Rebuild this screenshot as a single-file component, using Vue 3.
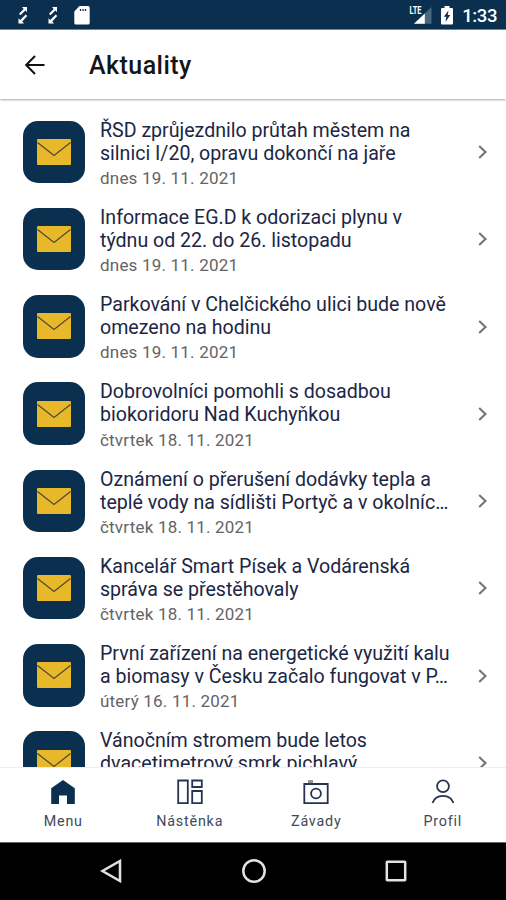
<script setup>
import { ref } from 'vue'

const activeTab = ref('menu')

const articles = [
  { id: 1, lines: ['ŘSD zprůjezdnilo průtah městem na', 'silnici I/20, opravu dokončí na jaře'], date: 'dnes 19. 11. 2021' },
  { id: 2, lines: ['Informace EG.D k odorizaci plynu v', 'týdnu od 22. do 26. listopadu'], date: 'dnes 19. 11. 2021' },
  { id: 3, lines: ['Parkování v Chelčického ulici bude nově', 'omezeno na hodinu'], date: 'dnes 19. 11. 2021' },
  { id: 4, lines: ['Dobrovolníci pomohli s dosadbou', 'biokoridoru Nad Kuchyňkou'], date: 'čtvrtek 18. 11. 2021' },
  { id: 5, lines: ['Oznámení o přerušení dodávky tepla a', 'teplé vody na sídlišti Portyč a v okolníc…'], date: 'čtvrtek 18. 11. 2021' },
  { id: 6, lines: ['Kancelář Smart Písek a Vodárenská', 'správa se přestěhovaly'], date: 'čtvrtek 18. 11. 2021' },
  { id: 7, lines: ['První zařízení na energetické využití kalu', 'a biomasy v Česku začalo fungovat v P…'], date: 'úterý 16. 11. 2021' },
  { id: 8, lines: ['Vánočním stromem bude letos', 'dvacetimetrový smrk pichlavý'] },
]

const tabs = [
  { id: 'menu', label: 'Menu' },
  { id: 'board', label: 'Nástěnka' },
  { id: 'issues', label: 'Závady' },
  { id: 'profile', label: 'Profil' },
]
</script>

<template>
  <div class="phone">
    <header class="status-bar">
      <div class="status-left">
        <svg v-for="n in 2" :key="n" class="sync-icon" width="10" height="17" viewBox="0 0 10 17">
          <path d="M4 0h5v5L7.300 3.500 2.500 8.300 1 6.800l4.700-4.900z" />
          <path d="M6 16.500H.5v-5.300l1.700 1.700L7.700 7.500 9.200 9l-5 5.500z" />
        </svg>
        <svg class="sd-icon" width="16" height="19" viewBox="0 0 16 19">
          <path d="M5.500 0H14a1.700 1.700 0 0 1 1.700 1.700v15.200a1.700 1.700 0 0 1-1.700 1.700H2A1.700 1.700 0 0 1 .3 16.900V5.500z" fill="#fff" />
          <path d="M6.500 3v2M9 3v2M11.500 3v2" stroke="#0b304f" stroke-width="1.300" />
        </svg>
      </div>
      <div class="status-right">
        <svg width="23" height="20" viewBox="0 0 23 20">
          <path d="M22.500 1v16.800H5z" fill="#48687f" />
          <path d="M15.800 7.500v10.300H5z" fill="#fff" />
          <path d="M0 0h13v9.300H0z" fill="#0b304f" />
          <text x=".5" y="8.200" class="lte" textLength="12" lengthAdjust="spacingAndGlyphs">LTE</text>
        </svg>
        <svg class="battery" width="12" height="19" viewBox="0 0 12 19">
          <path d="M3.500 0h5v2H11a1 1 0 0 1 1 1v14.500a1 1 0 0 1-1 1H1a1 1 0 0 1-1-1V3a1 1 0 0 1 1-1h2.500z" fill="#fff" />
          <path d="M7.500 4.500L2.800 10.800h2.500L4.500 16 9.200 9H6.700z" fill="#0b304f" />
        </svg>
        <span class="clock">1:33</span>
      </div>
    </header>

    <section class="app-bar">
      <button class="back-btn" aria-label="Zpět">
        <svg width="20" height="20" viewBox="0 0 20 20">
          <path d="M19.500 10H1.500M10 1L1.200 10l8.800 9" fill="none" stroke="#111" stroke-width="2" />
        </svg>
      </button>
      <h1>Aktuality</h1>
    </section>

    <main class="news-list">
      <article v-for="article in articles" :key="article.id" class="news-row">
        <div class="news-icon">
          <svg width="34" height="26" viewBox="0 0 34 26">
            <rect width="34" height="26" rx="1" fill="#e8b82b" />
            <path d="M.5 3.500L17 16.500 33.500 3.500" fill="none" stroke="#4b4930" stroke-width="1.200" />
          </svg>
        </div>
        <div class="news-text">
          <h2>
            <span v-for="line in article.lines" :key="line">{{ line }}</span>
          </h2>
          <p v-if="article.date">{{ article.date }}</p>
        </div>
        <svg class="chevron" width="10" height="14" viewBox="0 0 10 14">
          <path d="M1.200 1l6.300 6-6.300 6" fill="none" stroke="#747474" stroke-width="2.100" />
        </svg>
      </article>
    </main>

    <nav class="tab-bar">
      <button
          v-for="tab in tabs"
          :key="tab.id"
          class="tab"
          @click="activeTab = tab.id"
      >
        <svg v-if="tab.id === 'menu'" width="26" height="26" viewBox="0 0 26 26">
          <path d="M13 1l11.800 8.300V25H17v-8.500H9V25H1.200V9.300z" fill="#0b304f" />
        </svg>
        <svg v-else-if="tab.id === 'board'" class="outline" width="26" height="26" viewBox="0 0 26 26">
          <path d="M1.200 1.500h9.600v22.700H1.200zM15.200 1.500h9.600v6.500h-9.600zM15.200 12h9.600v12.200h-9.600z" />
        </svg>
        <svg v-else-if="tab.id === 'issues'" class="outline" width="26" height="26" viewBox="0 0 26 26">
          <path d="M1.300 5h23.400v19.200H1.300z" />
          <path d="M5 2.600h5" class="flash" />
          <circle cx="13" cy="14.500" r="4.900" />
        </svg>
        <svg v-else class="outline" width="26" height="26" viewBox="0 0 26 26">
          <circle cx="13" cy="7.300" r="5.900" />
          <path d="M2.500 24C4.200 18.800 8 16.800 13 16.800s8.800 2 10.500 7.200" />
        </svg>
        <span>{{ tab.label }}</span>
      </button>
    </nav>

    <footer class="system-bar">
      <svg width="22" height="24" viewBox="0 0 22 24">
        <path d="M20 2v20L2.500 12z" />
      </svg>
      <svg width="24" height="24" viewBox="0 0 24 24">
        <circle cx="12" cy="12" r="10.700" />
      </svg>
      <svg width="22" height="22" viewBox="0 0 22 22">
        <rect x="1.800" y="1.800" width="18.400" height="18.400" rx=".5" />
      </svg>
    </footer>
  </div>
</template>

<style>
body{
  margin:0;
}
</style>

<style scoped>
.phone{
  width:506px;
  height:900px;
  display:flex;
  flex-direction:column;
  overflow:hidden;
  background:#fff;
  font-family:Roboto, sans-serif;
}

button{
  border:none;
  background:transparent;
  padding:0;
  font-family:inherit;
  cursor:pointer;
}

.status-bar{
  height:30px;
  flex:none;
  box-sizing:border-box;
  display:flex;
  justify-content:space-between;
  background:#0b304f;
  border-bottom:1px solid #78848f;
}

.status-left{
  display:flex;
  align-items:flex-start;
  padding:7px 0 0 18px;
}

.sync-icon{
  margin-right:20px;
}

.sync-icon path{
  fill:#fff;
}

.sd-icon{
  margin:-1px 0 0 -4px;
}

.status-right{
  display:flex;
  align-items:flex-start;
  padding:6px 9px 0 0;
}

.lte{
  fill:#fff;
  font-size:10.5px;
  font-weight:700;
}

.battery{
  margin-left:9px;
}

.clock{
  width:35px;
  margin-left:9px;
  color:#fff;
  font-size:18.5px;
  font-weight:500;
  line-height:21px;
  letter-spacing:-.4px;
  text-align:right;
}

.app-bar{
  height:69px;
  flex:none;
  display:flex;
  align-items:center;
  padding-left:25px;
  box-shadow:0 1px 2px rgba(0,0,0,.35);
  z-index:1;
}

.back-btn{
  display:flex;
}

.app-bar h1{
  margin:2px 0 0 44px;
  color:#151515;
  font-size:25px;
  font-weight:500;
  letter-spacing:.45px;
}

.news-list{
  flex:1;
  min-height:0;
  overflow:hidden;
  padding-top:19.6px;
}

.news-row{
  height:87.25px;
  display:flex;
  align-items:flex-start;
  padding:0 18px 0 22.5px;
}

.news-icon{
  width:62.5px;
  height:62.5px;
  margin-top:2px;
  flex:none;
  display:flex;
  align-items:center;
  justify-content:center;
  border-radius:15px;
  background:#0b304f;
}

.news-text{
  flex:1;
  padding-left:15px;
}

.news-text h2{
  margin:0;
  color:#1b2745;
  font-size:19.6px;
  font-weight:400;
  line-height:23px;
  letter-spacing:-.01px;
}

.news-text h2 span{
  display:block;
  white-space:nowrap;
}

.news-text p{
  margin:2.3px 0 0;
  color:#646464;
  font-size:17px;
  line-height:22px;
  letter-spacing:.2px;
}

.chevron{
  margin-top:26.5px;
}

.tab-bar{
  height:75px;
  flex:none;
  box-sizing:border-box;
  display:flex;
  border-top:1px solid #eee;
}

.tab{
  flex:1;
  display:flex;
  flex-direction:column;
  align-items:center;
  padding-top:11px;
}

.tab span{
  margin-top:8px;
  color:#3d4a5b;
  font-size:14.3px;
  line-height:17px;
  letter-spacing:.8px;
}

.outline path,
.outline circle{
  fill:none;
  stroke:#263451;
  stroke-width:1.8;
}

.outline .flash{
  stroke:#8b929d;
  stroke-width:3;
}

.system-bar{
  height:58px;
  flex:none;
  box-sizing:border-box;
  display:flex;
  align-items:center;
  justify-content:space-between;
  padding:0 99px 2px 100px;
  background:#000;
  border-top:1px solid #666;
}

.system-bar svg *{
  fill:none;
  stroke:#e2e2e2;
  stroke-width:2.5;
}
</style>
